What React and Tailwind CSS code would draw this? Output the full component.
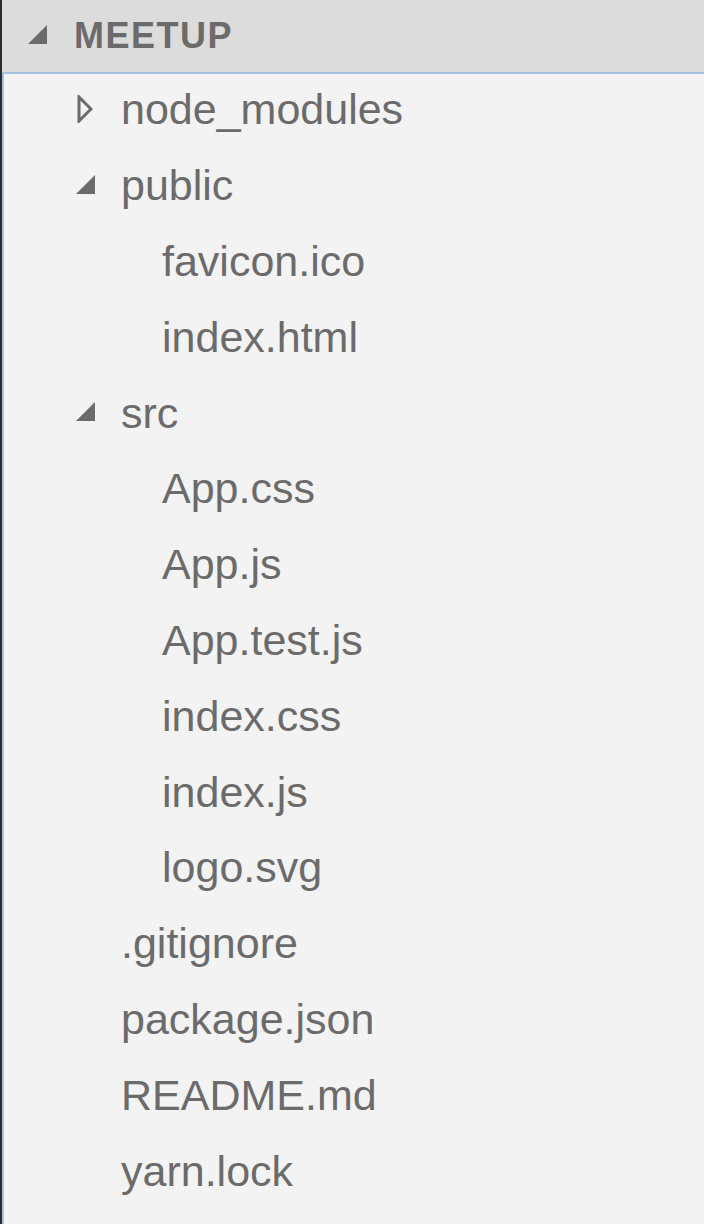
import React from "react";

const rows = [
  { name: "node_modules", depth: 0, caret: "closed" },
  { name: "public", depth: 0, caret: "open" },
  { name: "favicon.ico", depth: 1 },
  { name: "index.html", depth: 1 },
  { name: "src", depth: 0, caret: "open" },
  { name: "App.css", depth: 1 },
  { name: "App.js", depth: 1 },
  { name: "App.test.js", depth: 1 },
  { name: "index.css", depth: 1 },
  { name: "index.js", depth: 1 },
  { name: "logo.svg", depth: 1 },
  { name: ".gitignore", depth: 0 },
  { name: "package.json", depth: 0 },
  { name: "README.md", depth: 0 },
  { name: "yarn.lock", depth: 0 },
];

function OpenCaret({ className }) {
  return (
    <svg className={className} width="20" height="20" viewBox="0 0 20 20">
      <polygon points="19,0 19,19 0,19" fill="#6b6b6b" />
    </svg>
  );
}

function ClosedCaret({ className }) {
  return (
    <svg className={className} width="16" height="28" viewBox="0 0 16 28">
      <polygon points="2,2 14,14 2,26" fill="none" stroke="#6b6b6b" strokeWidth="3" />
    </svg>
  );
}

export default function App() {
  return (
    <div className="flex h-[1224px] w-[704px] bg-[#2c2c2c] pl-[2px] font-['Liberation_Sans',Arial,sans-serif] text-[#6b6b6b]">
      <div className="flex flex-1 flex-col">
        {/* section header */}
        <div className="flex h-[72px] items-center bg-[#dcdcdc]">
          <OpenCaret className="ml-[26px] mt-[-2px]" />
          <span className="ml-[26px] text-[36px] font-bold uppercase tracking-[1.5px]">Meetup</span>
        </div>
        {/* tree, focused */}
        <div className="flex-1 border-l-2 border-t-2 border-[#a4c2e2] bg-[#f3f3f3]">
          <div className="-mt-[2px]">
            {rows.map(r => (
              <div key={r.name} className="relative flex h-[75.8px] items-center text-[43px] leading-none">
                {r.caret === "open" && <OpenCaret className="absolute left-[72px] top-[27px]" />}
                {r.caret === "closed" && <ClosedCaret className="absolute left-[73px] top-[23px]" />}
                <span className={r.depth ? "ml-[158px]" : "ml-[117px]"}>{r.name}</span>
              </div>
            ))}
          </div>
        </div>
      </div>
    </div>
  );
}
